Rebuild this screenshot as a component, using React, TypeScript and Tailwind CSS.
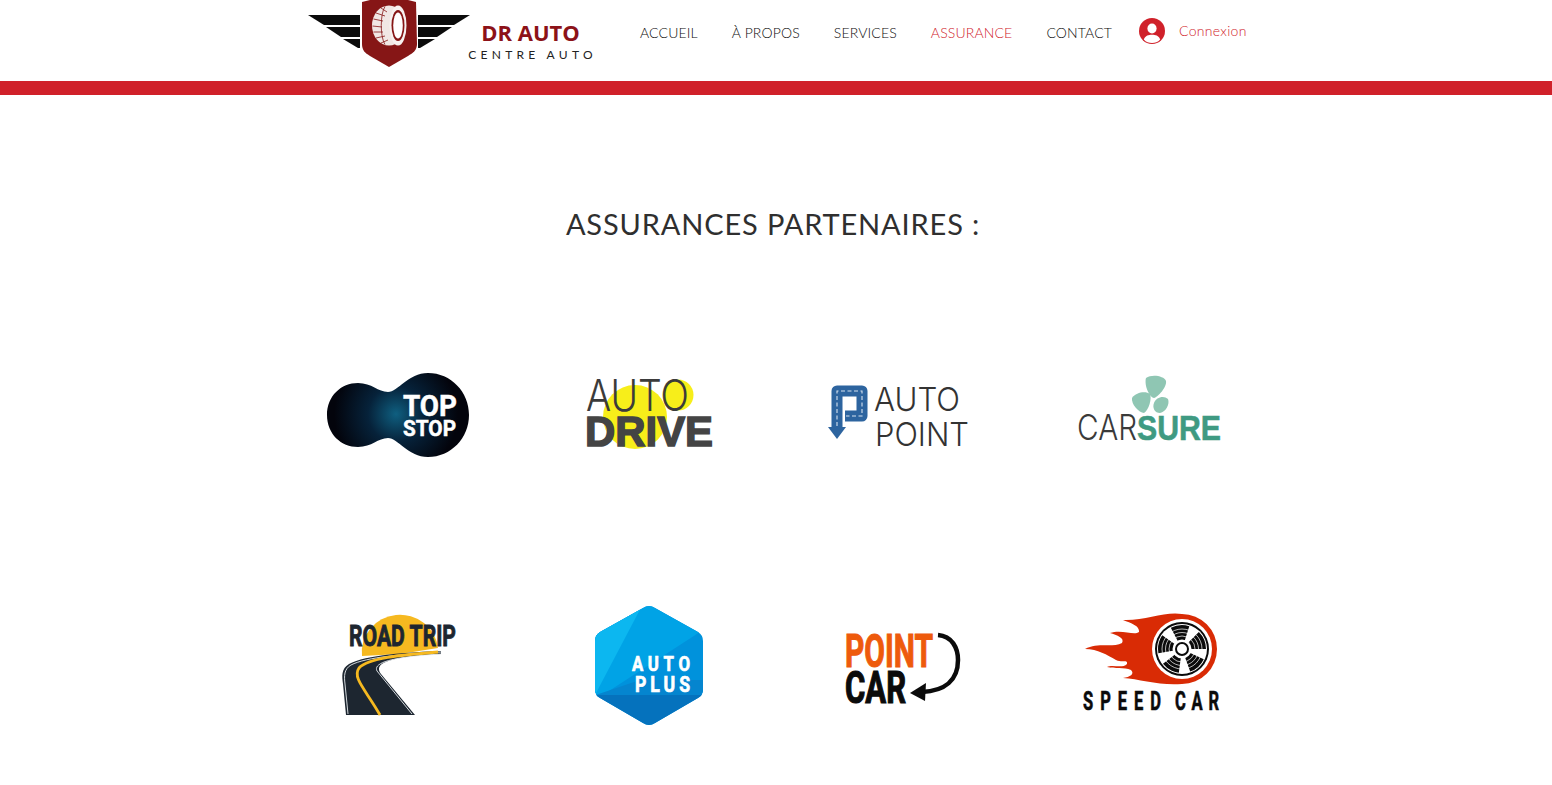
import type { ReactNode } from "react";

const NAV = ["ACCUEIL", "À PROPOS", "SERVICES", "ASSURANCE", "CONTACT"];

function BrandMark() {
  return (
    <svg width="164" height="70" viewBox="307 0 164 70" className="shrink-0">
      {/* wings */}
      <g fill="#0b0b0b">
        <polygon points="308,15 360,15 360,25 324,25" />
        <polygon points="326,27 360,27 360,37 341,37" />
        <polygon points="343,39 360,39 360,48 358,48" />
        <polygon points="470,15 418,15 418,25 454,25" />
        <polygon points="452,27 418,27 418,37 437,37" />
        <polygon points="435,39 418,39 418,48 420,48" />
      </g>
      {/* shield */}
      <path d="M362 2 L370 0 L408 0 L416 2 L417 44 C417 50 413 53 408 56 L389 67 L370 56 C365 53 362 50 362 44Z" fill="#861616" />
      {/* tire */}
      <ellipse cx="389" cy="25.5" rx="17" ry="20" fill="#f1e7e4" />
      <g stroke="#861616" strokeWidth="0.8" fill="none">
        <path d="M376 13 L385 16 M373.500 19 L383 21 M372.500 26 L382 27 M373.500 32 L383 32 M376 38 L385 36 M381 8 L387 12 M381 43 L388 40" />
        <path d="M385 6.500 C380 14 380 37 385 44.500" />
      </g>
      <ellipse cx="398" cy="25.500" rx="8.500" ry="20" fill="#f7f2f0" />
      <ellipse cx="398" cy="25.500" rx="6.500" ry="15.500" fill="#861616" />
      <ellipse cx="398" cy="25.500" rx="4.800" ry="13" fill="#ffffff" />
    </svg>
  );
}

function UserIcon() {
  return (
    <svg width="26" height="26" viewBox="0 0 26 26" className="shrink-0">
      <circle cx="13" cy="13" r="13" fill="#d0212a" />
      <ellipse cx="13" cy="10.5" rx="4.6" ry="5" fill="#ffffff" />
      <path d="M4.8 21.5 C6.5 17.5 9.5 16.8 13 16.8 C16.5 16.8 19.5 17.5 21.2 21.5 C19 24.3 16 25 13 25 C10 25 7 24.3 4.8 21.5Z" fill="#ffffff" />
    </svg>
  );
}

// each logo is drawn in page coordinates, the viewBox is its slot on the page
function Slot({ cx, cy, children }: { cx: number; cy: number; children: ReactNode }) {
  return (
    <div className="flex justify-center">
      <svg width="200" height="140" viewBox={`${cx - 100} ${cy - 70} 200 140`}>
        {children}
      </svg>
    </div>
  );
}

function T(props: {
  x: number;
  y: number;
  w: number;
  size: number;
  fill: string;
  weight?: number;
  family?: string;
  bold?: number;
  squeeze?: number; // narrows the letters, the gap between them makes up the width
  children: string;
}) {
  const { x, y, w, size, fill, weight = 700, family = "Liberation Sans", bold = 0, squeeze, children } = props;
  return (
    <text
      transform={`translate(${x} ${y}) scale(${squeeze ?? 1} 1)`}
      textLength={squeeze ? w / squeeze : w}
      lengthAdjust={squeeze ? "spacing" : "spacingAndGlyphs"}
      fontSize={size}
      fontWeight={weight}
      fontFamily={`"${family}", sans-serif`}
      fill={fill}
      stroke={bold ? fill : undefined}
      strokeWidth={bold || undefined}
    >
      {children}
    </text>
  );
}

function TopStop() {
  return (
    <Slot cx={398} cy={415}>
      <defs>
        <radialGradient id="ts" gradientUnits="userSpaceOnUse" cx="396" cy="414" r="62">
          <stop offset="0" stopColor="#0f5f80" />
          <stop offset="0.45" stopColor="#06223a" />
          <stop offset="1" stopColor="#03040c" />
        </radialGradient>
      </defs>
      <path
        d="M327 415 C327 396 341 383 358 383 C372 383 378 392 388 392 C398 392 408 373 428 373 C451 373 469 392 469 415 C469 438 451 457 428 457 C408 457 398 438 388 438 C378 438 372 447 358 447 C341 447 327 434 327 415Z"
        fill="url(#ts)"
      />
      <T x={403} y={416} w={54} size={30} fill="#ffffff" family="Roboto" bold={0.5}>TOP</T>
      <T x={403} y={436} w={53} size={22} fill="#ffffff" family="Roboto" bold={0.5}>STOP</T>
    </Slot>
  );
}

function AutoDrive() {
  return (
    <Slot cx={648} cy={415}>
      <circle cx="635" cy="417" r="32" fill="#f7ee1a" />
      <circle cx="678" cy="395" r="15.5" fill="#f7ee1a" />
      <T x={586} y={411} w={103} size={44} fill="#3b3b3b" weight={300} family="Inter">AUTO</T>
      <T x={585} y={446} w={128} size={42} fill="#444444" bold={1.5}>DRIVE</T>
    </Slot>
  );
}

function AutoPoint() {
  return (
    <Slot cx={898} cy={415}>
      <path d="M837 430 L837 391 L862 391 L862 416 L845 416" fill="none" stroke="#2d649f" strokeWidth="11" strokeLinejoin="round" />
      <polygon points="828,427 846,427 837,439" fill="#2d649f" />
      <path d="M837 426 L837 391 L862 391 L862 416 L846 416" fill="none" stroke="#d5e2ef" strokeWidth="1.1" strokeDasharray="4 2.5" />
      <T x={874} y={411} w={86} size={33} fill="#333333" weight={300} family="Inter">AUTO</T>
      <T x={875} y={446} w={94} size={33} fill="#333333" weight={300} family="Inter">POINT</T>
    </Slot>
  );
}

function CarSure() {
  return (
    <Slot cx={1148} cy={415}>
      <g fill="#8fc6b3">
        <path d="M1146 378 C1152 374 1164 376 1166 381 C1167 387 1158 397 1154 398 C1149 397 1144 385 1146 378Z" />
        <path d="M1132 398 C1136 392 1146 391 1150 394 C1152 398 1149 410 1144 413 C1139 413 1131 404 1132 398Z" />
        <path d="M1154 403 C1156 397 1164 395 1168 399 C1170 404 1166 412 1160 413 C1155 413 1152 408 1154 403Z" />
      </g>
      <T x={1077} y={440} w={60} size={35} fill="#3a3a3a" weight={300} family="Inter">CAR</T>
      <T x={1137} y={440} w={84} size={35} fill="#3f9a82" bold={0.6}>SURE</T>
    </Slot>
  );
}

function RoadTrip() {
  return (
    <Slot cx={398} cy={665}>
      <path d="M362 656 A38 37 0 1 1 438 648 L400 654 Z" fill="#f6b920" />
      <path d="M441 651 C410 652 365 655 349 664 C341 669 342 676 343 684 L346 715 L415 715 L381 674 C374 664 384 657 441 654Z" fill="#1d2630" />
      <path d="M441 652 C405 654 366 657 351 665 C344 669 344 676 345 684 L348 714" fill="none" stroke="#e9edf0" strokeWidth="0.9" />
      <path d="M441 654 C390 657 373 663 377 671 L412 714" fill="none" stroke="#e9edf0" strokeWidth="0.9" />
      <path d="M438 652 C400 655 368 658 359 668 C352 678 366 690 380 715" fill="none" stroke="#f6b920" strokeWidth="2.8" />
      <T x={349} y={646} w={107} size={29} fill="#1d2630" family="Roboto" bold={0.9}>ROAD TRIP</T>
    </Slot>
  );
}

function AutoPlus() {
  return (
    <Slot cx={648} cy={665}>
      <defs>
        <clipPath id="hx">
          <path d="M643 608 Q649 604 655 608 L698 632 Q703 635 703 641 L703 690 Q703 695 698 698 L655 723 Q649 727 643 723 L600 698 Q595 695 595 690 L595 641 Q595 635 600 632Z" />
        </clipPath>
      </defs>
      <g clipPath="url(#hx)">
        <rect x="590" y="600" width="120" height="130" fill="#0092dc" />
        <polygon points="590,600 660,600 703,630 595,700 590,700" fill="#00a3e6" />
        <polygon points="590,600 645,600 595,695 590,695" fill="#0cb7f0" />
        <polygon points="590,695 640,695 703,695 703,730 590,730" fill="#0572bd" />
        <polygon points="590,697 640,680 703,680 703,695 590,695" fill="#0585cf" />
      </g>
      <T x={632} y={671} w={58} size={21} fill="#ffffff" family="Roboto" bold={0.7} squeeze={0.8}>AUTO</T>
      <T x={635} y={692} w={55} size={22} fill="#ffffff" family="Roboto" bold={0.7} squeeze={0.8}>PLUS</T>
    </Slot>
  );
}

function PointCar() {
  return (
    <Slot cx={898} cy={665}>
      <T x={845} y={667} w={88} size={46} fill="#ee5a0c" family="Roboto" bold={1.1}>POINT</T>
      <T x={845} y={703} w={61} size={44} fill="#0b0b0b" family="Roboto" bold={1.2}>CAR</T>
      <path d="M938 635 C952 636 958 648 958 660 C958 680 945 691 922 692" fill="none" stroke="#0b0b0b" strokeWidth="4.5" />
      <polygon points="910,693 926,683 925,701" fill="#0b0b0b" />
    </Slot>
  );
}

function SpeedCar() {
  return (
    <Slot cx={1148} cy={665}>
      <path
        d="M1182 614 C1165 611 1145 621 1123 620 C1131 623 1140 626 1139 632 C1134 636 1122 629 1110 633 C1117 635 1125 638 1122 643 C1113 648 1098 642 1085 649 C1098 649 1107 655 1116 660 C1122 663 1128 659 1127 664 C1122 669 1113 664 1107 667 C1115 669 1124 667 1131 670 C1135 674 1130 677 1123 678 C1140 679 1160 686 1182 684 A35 35 0 0 0 1182 614Z"
        fill="#d92b05"
      />
      <circle cx="1182" cy="649" r="30" fill="#ffffff" />
      <circle cx="1182" cy="649" r="27" fill="#0b0b0b" />
      <circle cx="1182" cy="649" r="25" fill="#ffffff" />
      <circle cx="1182" cy="649" r="16" fill="none" stroke="#0b0b0b" strokeWidth="16" strokeDasharray="12.5 7.6" transform="rotate(25 1182 649)" />
      <g fill="none" stroke="#ffffff" strokeWidth="0.7">
        <circle cx="1182" cy="649" r="13" />
        <circle cx="1182" cy="649" r="16.5" />
        <circle cx="1182" cy="649" r="20" />
      </g>
      <circle cx="1182" cy="649" r="9.5" fill="#ffffff" />
      <circle cx="1182" cy="649" r="6" fill="none" stroke="#0b0b0b" strokeWidth="2" />
      <T x={1083} y={710} w={78} size={25} fill="#0b0b0b" family="Roboto" bold={0.6} squeeze={0.66}>SPEED</T>
      <T x={1175} y={710} w={44} size={25} fill="#0b0b0b" family="Roboto" bold={0.6} squeeze={0.66}>CAR</T>
    </Slot>
  );
}

export default function App() {
  return (
    <div className="bg-white min-h-[785px] font-['Lato',sans-serif]">
      {/* HEADER */}
      <header className="h-[81px] flex pl-[307px]">
        <div className="flex self-start">
          <BrandMark />
          <div className="w-[132px] ml-[-7px] pt-[20px] flex flex-col items-center">
            <span className="font-['Open_Sans',sans-serif] font-bold text-[22px] leading-[24px] text-[#8c1218] pl-[1px]">
              DR AUTO
            </span>
            <span className="text-[12px] leading-[14px] mt-[4px] pl-[5px] tracking-[4.3px] text-[#222222] whitespace-nowrap">
              CENTRE AUTO
            </span>
          </div>
        </div>

        <nav className="flex gap-[34px] ml-[44px] pt-[24px] text-[14px] leading-[18px] font-light tracking-[0.15px] text-[#0a0a0a] h-fit">
          {NAV.map((item) => (
            <a key={item} className={item === "ASSURANCE" ? "text-[#d0212a]" : ""}>
              {item}
            </a>
          ))}
        </nav>

        <div className="flex items-center ml-[27px] mt-[18px] h-[26px]">
          <UserIcon />
          <span className="ml-[14px] text-[14px] font-light tracking-[0.3px] text-[#d0212a] pb-[2px]">
            Connexion
          </span>
        </div>
      </header>

      <div className="h-[14px] bg-[#d0212a]" />

      {/* PARTENAIRES */}
      <main className="w-[1000px] ml-[273px]">
        <h1 className="pt-[109px] text-center text-[29px] leading-[40px] tracking-[0.85px] text-[#2f2f2f]">
          ASSURANCES PARTENAIRES :
        </h1>

        <div className="grid grid-cols-4 gap-y-[110px] mt-[101px]">
          <TopStop />
          <AutoDrive />
          <AutoPoint />
          <CarSure />
          <RoadTrip />
          <AutoPlus />
          <PointCar />
          <SpeedCar />
        </div>
      </main>
    </div>
  );
}
